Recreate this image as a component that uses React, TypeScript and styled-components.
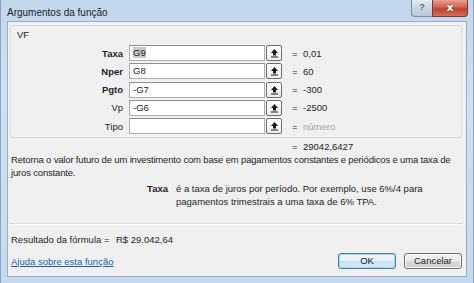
import styled, { createGlobalStyle } from "styled-components";

const GlobalStyle = createGlobalStyle`
  html, body {
    margin: 0;
    padding: 0;
    background: #ffffff;
  }
  body {
    font-family: "Liberation Sans", Arial, sans-serif;
    font-size: 9.5px;
    line-height: 13px;
    color: #1e1e1e;
  }
`;

interface Arg {
  name: string;
  value: string;
  result: string;
  required: boolean;
  placeholder?: boolean;
  selected?: boolean;
}

const args: Arg[] = [
  { name: "Taxa", value: "G9", result: "0,01", required: true, selected: true },
  { name: "Nper", value: "G8", result: "60", required: true },
  { name: "Pgto", value: "-G7", result: "-300", required: true },
  { name: "Vp", value: "-G6", result: "-2500", required: false },
  { name: "Tipo", value: "", result: "número", required: false, placeholder: true },
];

const RefIcon = () => (
  <svg width="9" height="10" viewBox="0 0 9 10">
    <path d="M4.5 1 L8 5 L6 5 L6 7.5 L3 7.5 L3 5 L1 5 Z" fill="#1a1a1a" />
    <rect x="1" y="8.5" width="7" height="1" fill="#1a1a1a" />
  </svg>
);

const App = () => {
  return (
    <Window>
      <GlobalStyle />
      <TitleBar>
        <Title>Argumentos da função</Title>
        <Controls>
          <HelpButton>?</HelpButton>
          <CloseButton>x</CloseButton>
        </Controls>
      </TitleBar>

      <Client>
        <GroupBox>
          <FuncName>VF</FuncName>
          <ArgGrid>
            {args.map((arg) => (
              <ArgRow key={arg.name}>
                <ArgLabel $bold={arg.required}>{arg.name}</ArgLabel>
                <ArgInput>
                  {arg.selected ? <Selection>{arg.value}</Selection> : arg.value}
                </ArgInput>
                <RefButton>
                  <RefIcon />
                </RefButton>
                <Equals>=</Equals>
                <ArgValue $muted={arg.placeholder}>{arg.result}</ArgValue>
              </ArgRow>
            ))}
          </ArgGrid>
        </GroupBox>

        <TotalRow>
          <Equals>=</Equals>
          <ArgValue>29042,6427</ArgValue>
        </TotalRow>

        <Description>
          Retorna o valor futuro de um investimento com base em pagamentos
          constantes e periódicos e uma taxa de juros constante.
        </Description>

        <ParamHelp>
          <ParamName>Taxa</ParamName>
          <ParamText>
            é a taxa de juros por período. Por exemplo, use 6%/4 para
            pagamentos trimestrais a uma taxa de 6% TPA.
          </ParamText>
        </ParamHelp>

        <Separator />

        <FormulaResult>
          <span>Resultado da fórmula =</span>
          <span>R$ 29.042,64</span>
        </FormulaResult>

        <Footer>
          <HelpLink href="#">Ajuda sobre esta função</HelpLink>
          <Buttons>
            <DialogButton $default>OK</DialogButton>
            <DialogButton>Cancelar</DialogButton>
          </Buttons>
        </Footer>
      </Client>
    </Window>
  );
};

const Window = styled.div`
  width: 474px;
  height: 283px;
  box-sizing: border-box;
  display: flex;
  flex-direction: column;
  overflow: hidden;
  background: linear-gradient(180deg, #c2d6ec 0%, #cfe0f2 30%, #c6daef 100%);
  border-left: 1px solid #8aa3c0;
  border-right: 1px solid #8aa3c0;
  padding: 0 6px 6px 6px;
`;

const TitleBar = styled.div`
  flex-shrink: 0;
  height: 21px;
  display: flex;
  align-items: flex-start;
  justify-content: space-between;
`;

const Title = styled.span`
  margin-top: 6px;
  font-size: 10px;
  color: #1c1c1c;
`;

const Controls = styled.div`
  display: flex;
  margin-right: -1px;
`;

const HelpButton = styled.div`
  width: 21px;
  height: 17px;
  box-sizing: border-box;
  border: 1px solid #7d8ea3;
  border-top: none;
  border-right: none;
  border-radius: 0 0 0 4px;
  background: linear-gradient(180deg, #e4ecf5 0%, #c9d6e5 50%, #b8c8da 100%);
  color: #5a6a80;
  font-size: 9px;
  font-weight: bold;
  text-align: center;
  line-height: 15px;
`;

const CloseButton = styled.div`
  width: 36px;
  height: 17px;
  box-sizing: border-box;
  border: 1px solid #7a3a33;
  border-top: none;
  border-radius: 0 0 4px 0;
  background: linear-gradient(180deg, #e8a293 0%, #d2604f 45%, #c2402e 55%, #d2705f 100%);
  color: #ffffff;
  font-family: "DejaVu Sans", sans-serif;
  font-size: 11px;
  font-weight: bold;
  text-align: center;
  line-height: 15px;
  text-shadow: 0 0 2px #6a1a10;
`;

const Client = styled.div`
  flex: 1;
  min-height: 0;
  display: flex;
  flex-direction: column;
  background: #f0f0f0;
  border: 1px solid #98aec6;
  padding: 3px 4px 0 2px;
`;

const GroupBox = styled.div`
  flex-shrink: 0;
  border: 1px solid #d5dbe1;
  border-radius: 3px;
  height: 113px;
  box-sizing: border-box;
  padding: 2px 0 0 0;
`;

const FuncName = styled.div`
  margin-left: 6px;
`;

const ArgGrid = styled.div`
  display: flex;
  flex-direction: column;
  gap: 2.25px;
  margin-top: 4px;
`;

const ArgRow = styled.div`
  display: grid;
  grid-template-columns: 118px 136px 17px 20px auto;
  align-items: center;
  height: 16px;
`;

const ArgLabel = styled.span<{ $bold?: boolean }>`
  text-align: right;
  padding-right: 6px;
  font-weight: ${({ $bold }) => ($bold ? "bold" : "normal")};
`;

const ArgInput = styled.div`
  height: 16px;
  box-sizing: border-box;
  border: 1px solid #abadb3;
  border-top-color: #8e9095;
  background: #ffffff;
  padding: 0 3px;
  line-height: 14px;
`;

const Selection = styled.span`
  background: #c8c8c8;
`;

const RefButton = styled.div`
  height: 16px;
  box-sizing: border-box;
  margin-left: 1px;
  border: 1px solid #6f6f6f;
  border-radius: 2px;
  background: linear-gradient(180deg, #ffffff, #ececec);
  display: flex;
  align-items: center;
  justify-content: center;
`;

const Equals = styled.span`
  display: inline-block;
  box-sizing: border-box;
  width: 20px;
  padding-left: 10px;
`;

const ArgValue = styled.span<{ $muted?: boolean }>`
  padding-left: 1px;
  color: ${({ $muted }) => ($muted ? "#a3a3a3" : "#1e1e1e")};
`;

const TotalRow = styled.div`
  flex-shrink: 0;
  display: flex;
  padding-left: 272px;
  margin-top: 2px;
`;

const Description = styled.p`
  flex-shrink: 0;
  margin: 0;
  padding-left: 1px;
  width: 452px;
  letter-spacing: -0.17px;
`;

const ParamHelp = styled.div`
  flex-shrink: 0;
  display: grid;
  grid-template-columns: 166px 250px;
  margin-top: 3px;
`;

const ParamName = styled.span`
  font-weight: bold;
  text-align: right;
  padding-right: 8px;
`;

const ParamText = styled.span``;

const Separator = styled.div`
  flex-shrink: 0;
  margin-top: 15px;
  height: 1px;
  background: #d9dee3;
  border-bottom: 1px solid #ffffff;
`;

const FormulaResult = styled.div`
  flex-shrink: 0;
  display: grid;
  grid-template-columns: 105px auto;
  white-space: nowrap;
  padding-left: 1px;
  margin-top: 8px;
`;

const Footer = styled.div`
  flex-shrink: 0;
  display: flex;
  align-items: center;
  justify-content: space-between;
  margin-top: 7px;
`;

const HelpLink = styled.a`
  color: #1a5fb4;
  text-decoration: underline;
  padding-left: 1px;
`;

const Buttons = styled.div`
  display: flex;
  gap: 8px;
`;

const DialogButton = styled.div<{ $default?: boolean }>`
  width: 58px;
  height: 16px;
  box-sizing: border-box;
  border: 1px solid ${({ $default }) => ($default ? "#3c7fb1" : "#707070")};
  border-radius: 3px;
  background: ${({ $default }) =>
    $default
      ? "linear-gradient(180deg, #f2f8fc 0%, #e3eef7 50%, #cde2f1 51%, #d8e9f5 100%)"
      : "linear-gradient(180deg, #f2f2f2 0%, #ebebeb 50%, #dddddd 51%, #cfcfcf 100%)"};
  box-shadow: ${({ $default }) => ($default ? "inset 0 0 0 1px #a7d4f0" : "inset 0 0 0 1px #fcfcfc")};
  text-align: center;
  line-height: 14px;
`;

export default App;
